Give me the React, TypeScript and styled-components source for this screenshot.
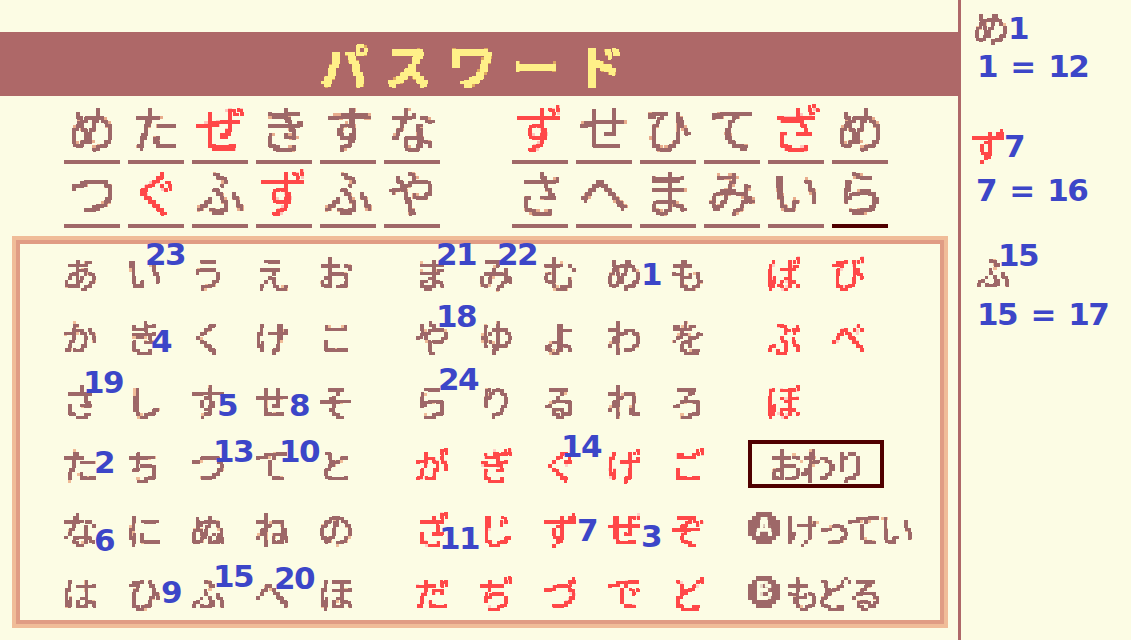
import React from "react";
import styled, { createGlobalStyle } from "styled-components";

const Global = createGlobalStyle`
  html, body { margin: 0; padding: 0; background: #fcfce4; }
  body { width: 1131px; height: 640px; overflow: hidden; font-family: "Noto Sans CJK JP", sans-serif; }
`;

type Tone = "brown" | "red" | "title";

const Defs = styled.svg`
  display: block;
  width: 0;
  height: 0;
`;

const PixelFilter = ({ id, low, high, shade }: { id: string; low: string; high: string; shade: string }) => (
  <filter id={id} x="0" y="0" width="100%" height="100%" primitiveUnits="userSpaceOnUse" colorInterpolationFilters="sRGB">
    <feGaussianBlur in="SourceGraphic" stdDeviation="0.7" result="soft" />
    <feFlood x="1" y="1" width="2" height="2" floodColor="#000" result="dot" />
    <feComposite in="dot" in2="dot" x="0" y="0" width="4" height="4" result="cell" />
    <feTile in="cell" result="grid" />
    <feComposite in="soft" in2="grid" operator="in" result="samples" />
    <feMorphology in="samples" operator="dilate" radius="1" result="blocks" />
    <feComponentTransfer in="blocks" result="lowMask">
      <feFuncA type="discrete" tableValues={low} />
    </feComponentTransfer>
    <feComponentTransfer in="blocks" result="highMask">
      <feFuncA type="discrete" tableValues={high} />
    </feComponentTransfer>
    <feFlood floodColor={shade} result="shadeFill" />
    <feComposite in="shadeFill" in2="lowMask" operator="in" result="shadeLayer" />
    <feMerge>
      <feMergeNode in="shadeLayer" />
      <feMergeNode in="highMask" />
    </feMerge>
  </filter>
);

const toneColor: Record<Tone, string> = { brown: "#9e6868", red: "#ff4848", title: "#fff088" };

const Page = styled.div`
  display: flex;
  width: 1131px;
  height: 640px;
  background: #fcfce4;
`;

const Main = styled.main`
  width: 958px;
  height: 640px;
  padding-top: 32px;
  box-sizing: border-box;
  flex: none;
`;

const TitleBar = styled.header`
  height: 64px;
  background: #ae6868;
  padding-left: 320px;
  display: flex;
  align-items: center;
`;

const TitleText = styled.h1`
  margin: 0;
  width: 320px;
  height: 64px;
  font: 700 48px/64px "Noto Sans CJK JP", sans-serif;
  letter-spacing: 16px;
  white-space: nowrap;
  color: #fff088;
  filter: url(#px-title);
`;

const SlotRow = styled.div`
  display: flex;
  padding-left: 64px;
  padding-top: 4px;
  height: 64px;
  box-sizing: border-box;
`;

const SlotGroup = styled.div`
  display: flex;
  gap: 8px;
  & + & {
    margin-left: 72px;
  }
`;

const Slot = styled.div<{ $active?: boolean }>`
  width: 56px;
  height: 60px;
  border-bottom: 4px solid ${(p) => (p.$active ? "#500000" : "#a06868")};
  box-sizing: content-box;
`;

const BigGlyph = styled.span<{ $tone: Tone }>`
  display: block;
  width: 56px;
  height: 60px;
  text-align: center;
  font: 400 50px/52px "Noto Sans CJK JP", sans-serif;
  color: ${(p) => toneColor[p.$tone]};
  filter: url(#px-${(p) => p.$tone}-big);
`;

const Panel = styled.section`
  margin: 12px 0 0 12px;
  width: 936px;
  height: 392px;
  box-sizing: border-box;
  border: 4px solid #f0bc98;
  position: relative;
`;

const PanelInner = styled.div`
  height: 100%;
  box-sizing: border-box;
  border: 4px solid #e09c84;
  padding: 12px 0 0 44px;
  display: flex;
  gap: 32px;
`;

const KanaGroup = styled.div`
  display: grid;
  grid-template-columns: repeat(5, 64px);
  grid-auto-rows: 64px;
`;

const SideGroup = styled.div`
  display: grid;
  grid-template-columns: repeat(2, 64px);
  grid-template-rows: repeat(6, 64px);
`;

const Cell = styled.div`
  display: flow-root;
  position: relative;
  width: 32px;
  height: 32px;
`;

const Glyph = styled.span<{ $tone: Tone }>`
  display: block;
  width: 40px;
  height: 40px;
  margin: -4px;
  text-align: center;
  font: 400 36px/40px "Noto Sans CJK JP", sans-serif;
  color: ${(p) => toneColor[p.$tone]};
  filter: url(#px-${(p) => p.$tone});
`;

const Badge = styled.span<{ $x: number; $y: number }>`
  position: absolute;
  left: ${(p) => p.$x - 2}px;
  top: ${(p) => p.$y - 4}px;
  font: 700 31px/32px "DejaVu Sans", sans-serif;
  letter-spacing: -1.5px;
  color: #3c46c8;
  white-space: nowrap;
  z-index: 2;
`;

const EndBox = styled.div`
  grid-column: 1 / span 2;
  width: 136px;
  height: 48px;
  box-sizing: border-box;
  margin: -8px 0 0 -20px;
  border: 4px solid #500000;
  padding: 4px 0 0 16px;
`;

const ActionRow = styled.div`
  grid-column: 1 / span 2;
  display: flex;
  margin-left: -20px;
  gap: 4px;
  width: 176px;
  height: 32px;
`;

const KeyCap = styled.span`
  display: block;
  flex: none;
  width: 32px;
  height: 32px;
  border-radius: 50%;
  background: #9e6868;
  color: #fcfce4;
  text-align: center;
  font: 700 26px/32px "Liberation Mono", monospace;
  filter: url(#px-brown);
`;

const WordGlyph = styled.span`
  display: block;
  width: 132px;
  height: 40px;
  margin: -4px 0;
  white-space: nowrap;
  font: 400 36px/40px "Noto Sans CJK JP", sans-serif;
  letter-spacing: -4px;
  color: #9e6868;
  filter: url(#px-brown);
`;

const Divider = styled.div`
  width: 3px;
  height: 640px;
  background: #ae6868;
  flex: none;
`;

const Sidebar = styled.aside`
  flex: 1;
`;

const Entry = styled.div<{ $top: number }>`
  padding-top: ${(p) => p.$top}px;
`;

const EntryCell = styled(Cell)<{ $left: number }>`
  margin-left: ${(p) => p.$left}px;
`;

const Formula = styled.div<{ $gap: number; $left: number }>`
  margin: ${(p) => p.$gap}px 0 0 ${(p) => p.$left}px;
  font: 700 31px/32px "DejaVu Sans", sans-serif;
  letter-spacing: -1.5px;
  word-spacing: 4px;
  color: #3c46c8;
  white-space: pre;
`;

const slotsTop = [
  ["め", "た", "ぜ", "き", "す", "な"],
  ["ず", "せ", "ひ", "て", "ざ", "め"],
];
const slotsBottom = [
  ["つ", "ぐ", "ふ", "ず", "ふ", "や"],
  ["さ", "へ", "ま", "み", "い", "ら"],
];
const redKana = "がぎぐげござじずぜぞだぢづでどばびぶべぼぱぴぷぺぽ";
const toneOf = (c: string): Tone => (redKana.includes(c) ? "red" : "brown");

const badges: Record<string, [string, number, number]> = {
  い: ["23", 19, -14],
  ま: ["21", 22, -14],
  み: ["22", 19, -14],
  め: ["1", 35, 6],
  き: ["4", 25, 9],
  や: ["18", 22, -16],
  さ: ["19", 21, -14],
  す: ["5", 27, 9],
  せ: ["8", 35, 9],
  ら: ["24", 24, -17],
  た: ["2", 32, 2],
  つ: ["13", 23, -9],
  て: ["10", 25, -9],
  ぐ: ["14", 19, -14],
  な: ["6", 32, 16],
  ざ: ["11", 25, 14],
  ず: ["7", 35, 6],
  ぜ: ["3", 35, 12],
  ひ: ["9", 35, 4],
  ふ: ["15", 23, -12],
  へ: ["20", 20, -10],
};

const leftKana = "あいうえおかきくけこさしすせそたちつてとなにぬねのはひふへほ".split("");
const midKana = "まみむめもやゆよわをらりるれろがぎぐげござじずぜぞだぢづでど".split("");

const sideEntries = [
  { glyph: "め", num: "1", top: 10, left: 14, bx: 35, by: 6, gap: 8, fl: 16, text: "1 = 12" },
  { glyph: "ず", num: "7", top: 46, left: 11, bx: 34, by: 6, gap: 14, fl: 15, text: "7 = 16" },
  { glyph: "ふ", num: "15", top: 49, left: 16, bx: 23, by: -12, gap: 11, fl: 16, text: "15 = 17" },
];

const KanaCell = ({ c }: { c: string }) => {
  const b = badges[c];
  return (
    <Cell>
      <Glyph $tone={toneOf(c)}>{c}</Glyph>
      {b && (
        <Badge $x={b[1]} $y={b[2]}>
          {b[0]}
        </Badge>
      )}
    </Cell>
  );
};

const SMALL_LOW = "0 1 1 1 1 1 1 1 1 1";
const SMALL_HIGH = "0 0 1 1 1 1 1 1 1 1";
const BIG_LOW = "0 1 1 1 1 1 1 1 1 1";
const BIG_HIGH = "0 0 0 1 1 1 1 1 1 1";

export default function App() {
  return (
    <Page>
      <Global />
      <Defs aria-hidden="true">
        <PixelFilter id="px-brown" low={SMALL_LOW} high={SMALL_HIGH} shade="#f0bc98" />
        <PixelFilter id="px-red" low={SMALL_LOW} high={SMALL_HIGH} shade="#ffd0c8" />
        <PixelFilter id="px-brown-big" low={BIG_LOW} high={BIG_HIGH} shade="#e8ac8c" />
        <PixelFilter id="px-red-big" low={BIG_LOW} high={BIG_HIGH} shade="#ffc4bc" />
        <PixelFilter id="px-title" low={BIG_LOW} high={BIG_HIGH} shade="#e0a860" />
      </Defs>
      <Main>
        <TitleBar>
          <TitleText>パスワード</TitleText>
        </TitleBar>
        {[slotsTop, slotsBottom].map((row, r) => (
          <SlotRow key={r}>
            {row.map((group, g) => (
              <SlotGroup key={g}>
                {group.map((c, i) => (
                  <Slot key={i} $active={r === 1 && g === 1 && i === 5}>
                    <BigGlyph $tone={toneOf(c)}>{c}</BigGlyph>
                  </Slot>
                ))}
              </SlotGroup>
            ))}
          </SlotRow>
        ))}
        <Panel>
          <PanelInner>
            <KanaGroup>
              {leftKana.map((c) => (
                <KanaCell key={c} c={c} />
              ))}
            </KanaGroup>
            <KanaGroup>
              {midKana.map((c) => (
                <KanaCell key={c} c={c} />
              ))}
            </KanaGroup>
            <SideGroup>
              {["ば", "び", "ぶ", "べ"].map((c) => (
                <KanaCell key={c} c={c} />
              ))}
              <KanaCell c="ぼ" />
              <span />
              <EndBox>
                <WordGlyph>おわり</WordGlyph>
              </EndBox>
              <ActionRow>
                <KeyCap>A</KeyCap>
                <WordGlyph>けってい</WordGlyph>
              </ActionRow>
              <ActionRow>
                <KeyCap>B</KeyCap>
                <WordGlyph>もどる</WordGlyph>
              </ActionRow>
            </SideGroup>
          </PanelInner>
        </Panel>
      </Main>
      <Divider />
      <Sidebar>
        {sideEntries.map((e) => (
          <Entry key={e.glyph} $top={e.top}>
            <EntryCell $left={e.left}>
              <Glyph $tone={toneOf(e.glyph)}>{e.glyph}</Glyph>
              <Badge $x={e.bx} $y={e.by}>
                {e.num}
              </Badge>
            </EntryCell>
            <Formula $gap={e.gap} $left={e.fl}>
              {e.text}
            </Formula>
          </Entry>
        ))}
      </Sidebar>
    </Page>
  );
}
